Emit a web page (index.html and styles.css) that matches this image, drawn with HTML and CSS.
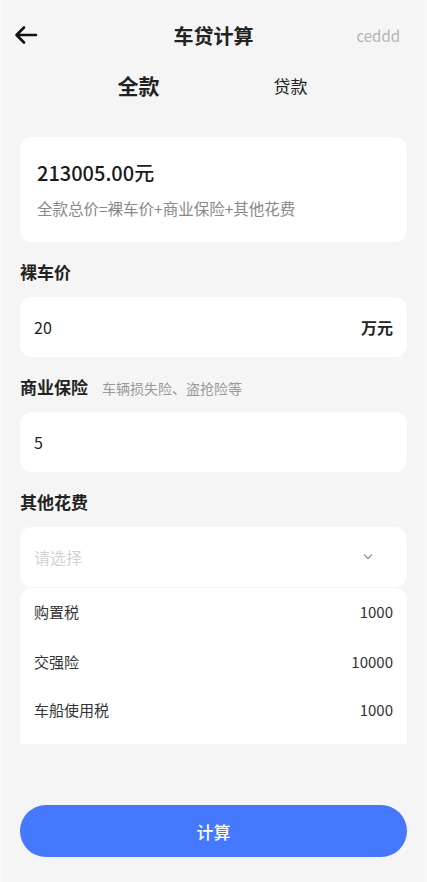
FILE: index.html
```html
<!DOCTYPE html>
<html lang="zh-CN">
<head>
    <meta charset="UTF-8">
    <meta name="viewport" content="width=device-width, initial-scale=1.0">
    <title>车贷计算</title>
    <link rel="stylesheet" href="styles.css">
</head>
<body>
    <div class="page">
        <header class="nav">
            <span class="back">
                <svg width="24" height="20" viewBox="0 0 24 20">
                    <path d="M22 10H3M10 2.5L2.5 10l7.5 7.5" fill="none" stroke="#111" stroke-width="2.6" stroke-linecap="round" stroke-linejoin="round"/>
                </svg>
            </span>
            <h1 class="title">车贷计算</h1>
            <span class="user">ceddd</span>
        </header>

        <div class="tabs">
            <span class="tab active">全款</span>
            <span class="tab">贷款</span>
        </div>

        <section class="card total">
            <div class="total-num">213005.00元</div>
            <div class="total-tip">全款总价=裸车价+商业保险+其他花费</div>
        </section>

        <div class="label">裸车价</div>
        <div class="card field">
            <span class="value">20</span>
            <span class="unit">万元</span>
        </div>

        <div class="label">商业保险<span class="hint">车辆损失险、盗抢险等</span></div>
        <div class="card field">
            <span class="value">5</span>
        </div>

        <div class="label">其他花费</div>
        <div class="card field select">
            <span class="placeholder">请选择</span>
            <svg class="chevron" width="10" height="6" viewBox="0 0 10 6">
                <path d="M1.5 1l3.5 3.5L8.5 1" fill="none" stroke="#999" stroke-width="1.3" stroke-linecap="round"/>
            </svg>
        </div>
        <ul class="fee-list">
            <li><span>购置税</span><span>1000</span></li>
            <li><span>交强险</span><span>10000</span></li>
            <li><span>车船使用税</span><span>1000</span></li>
        </ul>

        <button class="calc">计算</button>
    </div>
</body>
</html>
```

FILE: styles.css
```css
* {
    box-sizing: border-box;
}
body {
    margin: 0;
    background: #f8f8f8;
    font-family: "Noto Sans CJK SC", "Noto Sans", sans-serif;
    color: #222;
}
.page {
    margin: 0 3px;
    min-height: 882px;
    background: #f5f5f5;
    padding: 0 17px 25px;
    display: flex;
    flex-direction: column;
}
.nav {
    height: 70px;
    display: flex;
    align-items: center;
    justify-content: space-between;
    position: relative;
}
.back {
    display: flex;
    margin-left: -6px;
}
.title {
    position: absolute;
    left: 0;
    right: 0;
    margin: 0;
    text-align: center;
    font-size: 20px;
    font-weight: 600;
    pointer-events: none;
}
.user {
    font-size: 15px;
    color: #b3b3b3;
    margin-right: 7px;
}
.tabs {
    height: 30px;
    display: grid;
    grid-template-columns: 152px 152px;
    justify-content: center;
    align-items: center;
    margin-right: -2px;
    margin-bottom: 37px;
}
.tab {
    text-align: center;
    font-size: 17px;
    color: #222;
}
.tab.active {
    font-size: 21px;
    font-weight: 700;
}
.card {
    background: #fff;
    border-radius: 12px;
}
.total {
    padding: 22px 17px 24px;
}
.total-num {
    font-size: 20px;
    line-height: 28px;
    font-weight: 500;
    color: #1a1a1a;
}
.total-tip {
    margin-top: 11px;
    font-size: 15.5px;
    line-height: 20px;
    color: #888;
}
.label {
    margin: 18px 0 13px;
    font-size: 17px;
    line-height: 24px;
    height: 24px;
    font-weight: 600;
    color: #222;
}
.hint {
    margin-left: 14px;
    font-size: 14px;
    line-height: 1;
    font-weight: 400;
    color: #999;
}
.field {
    height: 60px;
    padding: 0 14px;
    display: flex;
    align-items: center;
    justify-content: space-between;
    font-size: 16px;
}
.unit {
    font-weight: 700;
}
.placeholder {
    color: #d2d2d2;
}
.chevron {
    margin-right: 20px;
}
.fee-list {
    list-style: none;
    margin: 1px 0 0;
    padding: 0 14px 9px;
    background: #fff;
    border-radius: 12px 12px 0 0;
}
.fee-list li {
    height: 50px;
    padding-bottom: 4px;
    display: flex;
    align-items: center;
    justify-content: space-between;
    font-size: 15px;
    color: #333;
}
.fee-list li:last-child {
    height: 47px;
}
.calc {
    margin-top: 61px;
    height: 52px;
    border: none;
    border-radius: 26px;
    background: #4678fe;
    color: #fff;
    font-family: inherit;
    font-size: 17px;
    font-weight: 500;
}
```
